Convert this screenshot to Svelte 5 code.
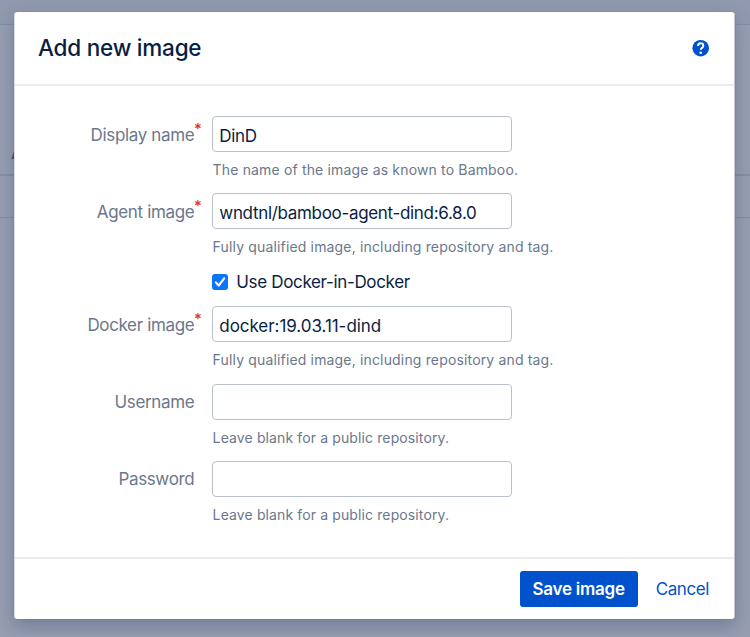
<script>
  let fields = $state([
    { id: 'name', label: 'Display name', required: true, type: 'text', value: 'DinD', help: 'The name of the image as known to Bamboo.' },
    { id: 'agent', label: 'Agent image', required: true, type: 'text', value: 'wndtnl/bamboo-agent-dind:6.8.0', help: 'Fully qualified image, including repository and tag.', dind: true },
    { id: 'docker', label: 'Docker image', required: true, type: 'text', value: 'docker:19.03.11-dind', help: 'Fully qualified image, including repository and tag.' },
    { id: 'username', label: 'Username', required: false, type: 'text', value: '', help: 'Leave blank for a public repository.' },
    { id: 'password', label: 'Password', required: false, type: 'password', value: '', help: 'Leave blank for a public repository.' }
  ]);
  let useDind = $state(true);
</script>

<div class="screen">
  <div class="page" aria-hidden="true">
    <div class="line first"></div>
    <div class="heading">A</div>
    <div class="line second"></div>
    <div class="line third"></div>
  </div>

  <div class="dialog" role="dialog" aria-labelledby="title">
    <header>
      <h2 id="title">Add new image</h2>
      <svg class="help-icon" width="17" height="17" viewBox="0 0 17 17" aria-label="Help">
        <circle cx="8.7" cy="8.2" r="8.3" fill="#0052cc" />
        <path d="M6.05 6.1C6.05 4.3 7.1 3.35 8.6 3.35s2.7 1 2.7 2.4c0 1.1-.6 1.6-1.3 2.1-.8.6-1.2.9-1.2 2" fill="none" stroke="#fff" stroke-width="2" />
        <circle cx="8.75" cy="12.8" r="1.3" fill="#fff" />
      </svg>
    </header>

    <form>
      {#each fields as field}
        <div class="field {field.id}">
          <label class="label" for={field.id}>{field.label}{#if field.required}<span class="star">*</span>{/if}</label>
          <div class="control">
            <input class="text" id={field.id} type={field.type} bind:value={field.value} autocomplete="off" />
            <div class="help">{field.help}</div>
          </div>
        </div>
        {#if field.dind}
          <label class="check">
            <input type="checkbox" bind:checked={useDind} />
            <span class="box">
              {#if useDind}
                <svg width="16" height="16" viewBox="0 0 16 16"><path d="M3.8 8.4l2.9 3.1 5.5-7.2" fill="none" stroke="#fff" stroke-width="2.1" stroke-linecap="round" stroke-linejoin="round" /></svg>
              {/if}
            </span>
            <span>Use Docker-in-Docker</span>
          </label>
        {/if}
      {/each}
    </form>

    <footer>
      <button class="save" type="button">Save image</button>
      <button class="cancel" type="button">Cancel</button>
    </footer>
  </div>
</div>

<style>
  .screen {
    position: relative;
    box-sizing: border-box;
    width: 750px;
    height: 637px;
    padding: 12px 15px 18px 14px;
    overflow: hidden;
    background: #979eb1;
    font-family: Inter, "Liberation Sans", sans-serif;
    color: #091e42;
  }
  .page {
    position: absolute;
    inset: 0;
    background: linear-gradient(#9199ae 0 24px, #979eb1 24px);
  }
  .line { position: absolute; left: 0; right: 0; height: 1px; background: #8490a7; }
  .first { top: 24px; }
  .second { top: 174px; height: 2px; }
  .third { top: 217px; }
  .heading { position: absolute; left: 11px; top: 145px; font-size: 16px; font-weight: 600; line-height: 16px; color: #4a5674; }
  .dialog {
    position: relative;
    display: flex;
    flex-direction: column;
    box-sizing: border-box;
    height: 607px;
    border: solid #dcdfe8;
    border-width: 0 1px;
    border-right-color: #c3c7d4;
    border-radius: 3px;
    background: #fff;
    box-shadow: 0 0 1px rgba(9, 30, 66, 0.5), 0 8px 18px rgba(9, 30, 66, 0.25);
  }
  header {
    display: flex;
    flex: none;
    align-items: center;
    justify-content: space-between;
    box-sizing: border-box;
    height: 74px;
    padding: 0 25px 0 23px;
    border-bottom: 2px solid #ebecf0;
  }
  h2 { margin: 0; font-size: 22.5px; font-weight: 500; line-height: 28px; letter-spacing: -0.22px; }
  .help-icon { display: block; overflow: visible; }
  form { flex: 1; padding-top: 30px; }
  .field { display: flex; height: 77px; }
  .docker { height: 78px; }
  .label {
    position: relative;
    width: 179.3px;
    margin-right: 18px;
    text-align: right;
    font-size: 17px;
    line-height: 38px;
    letter-spacing: -0.35px;
    color: #6b778c;
    white-space: nowrap;
  }
  .username .label, .password .label { line-height: 37px; }
  .star { position: absolute; left: 179px; top: -6px; font-size: 15px; font-weight: 500; color: #de350b; }
  .control { width: 420px; }
  .text {
    display: block;
    box-sizing: border-box;
    width: 300px;
    height: 36px;
    padding: 3px 6px 0;
    border: 1px solid #bac0cb;
    border-radius: 4px;
    outline: none;
    background: #fff;
    font: 17px/28px Inter, "Liberation Sans", sans-serif;
    letter-spacing: -0.32px;
    color: #091e42;
  }
  .docker .text { letter-spacing: -0.05px; }
  .help { margin-top: 8px; padding-left: 0.3px; font-size: 14px; line-height: 20px; letter-spacing: 0.16px; color: #6b778c; white-space: nowrap; }
  .username .help, .password .help { letter-spacing: 0.12px; }
  .check { display: flex; align-items: center; height: 20px; margin: 2px 0 14px 197.3px; font-size: 17px; letter-spacing: -0.34px; }
  .check input { position: absolute; opacity: 0; width: 0; height: 0; margin: 0; }
  .box { width: 16px; height: 16px; margin-right: 8px; border-radius: 3px; background: #0b75fb; }
  .box svg { display: block; }
  footer {
    display: flex;
    flex: none;
    align-items: center;
    justify-content: flex-end;
    box-sizing: border-box;
    height: 62px;
    padding-right: 25px;
    border-top: 2px solid #ebecf0;
  }
  button { padding: 0; border: 0; font: 17px/36px Inter, "Liberation Sans", sans-serif; cursor: pointer; white-space: nowrap; }
  .save { width: 118px; height: 36px; margin-right: 18px; border-radius: 3px; background: #0052cc; color: #fff; font-weight: 600; letter-spacing: -0.25px; }
  .cancel { background: none; color: #0052cc; letter-spacing: -0.4px; }
</style>
